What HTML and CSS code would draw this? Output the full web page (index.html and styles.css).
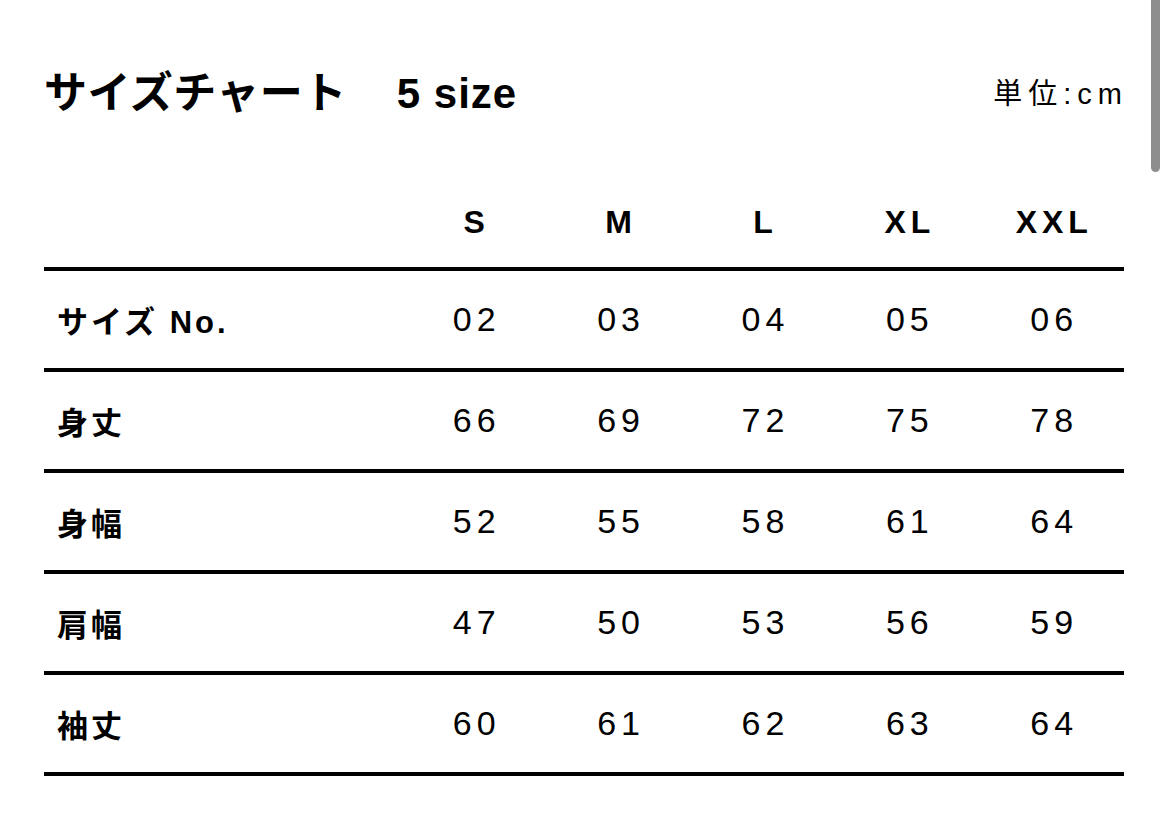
FILE: index.html
```html
<!DOCTYPE html>
<html lang="ja">
<head>
<meta charset="utf-8">
<title>サイズチャート</title>
<link rel="stylesheet" href="styles.css">
</head>
<body>
<div class="page">
  <div class="head">
    <h1 class="title">サイズチャート<span class="count">5 size</span></h1>
    <div class="unit">単位:cm</div>
  </div>
  <table class="chart">
    <colgroup>
      <col class="c-label">
      <col class="c-size"><col class="c-size"><col class="c-size"><col class="c-size"><col class="c-size">
    </colgroup>
    <thead>
      <tr><th></th><th>S</th><th>M</th><th>L</th><th>XL</th><th>XXL</th></tr>
    </thead>
    <tbody>
      <tr><th>サイズ No.</th><td>02</td><td>03</td><td>04</td><td>05</td><td>06</td></tr>
      <tr><th>身丈</th><td>66</td><td>69</td><td>72</td><td>75</td><td>78</td></tr>
      <tr><th>身幅</th><td>52</td><td>55</td><td>58</td><td>61</td><td>64</td></tr>
      <tr><th>肩幅</th><td>47</td><td>50</td><td>53</td><td>56</td><td>59</td></tr>
      <tr><th>袖丈</th><td>60</td><td>61</td><td>62</td><td>63</td><td>64</td></tr>
    </tbody>
  </table>
</div>
<div class="scrollbar"></div>
</body>
</html>
```

FILE: styles.css
```css
html, body {
  margin: 0;
  padding: 0;
  background: #fff;
}
body {
  font-family: "Liberation Sans", "Noto Sans CJK JP", sans-serif;
  color: #000;
}
.page {
  width: 1080px;
  padding: 59px 0 0 44px;
}
.head {
  display: flex;
  justify-content: space-between;
  align-items: center;
  height: 64px;
}
.title {
  margin: 0;
  font-family: "Noto Sans CJK JP", sans-serif;
  font-size: 43px;
  font-weight: 700;
  letter-spacing: 0.5px;
  line-height: 1;
}
.count {
  font-family: "Liberation Sans", sans-serif;
  font-size: 42px;
  font-weight: 700;
  margin-left: 50px;
  letter-spacing: 1px;
}
.unit {
  font-family: "Liberation Sans", "Noto Sans CJK JP", sans-serif;
  font-size: 29px;
  letter-spacing: 6px;
  margin-right: -4px;
}
.chart {
  width: 1080px;
  border-collapse: collapse;
  table-layout: fixed;
  margin-top: 54px;
}
.c-label { width: 358px; }
.c-size { width: 144.4px; }
.chart thead th {
  height: 90px;
  font-size: 32px;
  font-weight: 700;
  letter-spacing: 5px;
  padding: 0 0 0 5px;
  text-align: center;
  vertical-align: middle;
  border-bottom: 4px solid #000;
}
.chart tbody th {
  height: 97px;
  padding: 0 0 0 13px;
  text-align: left;
  font-family: "Liberation Sans", "Noto Sans CJK JP", sans-serif;
  font-size: 31px;
  font-weight: 700;
  letter-spacing: 3px;
  border-bottom: 4px solid #000;
  vertical-align: middle;
}
.chart tbody td {
  height: 97px;
  padding: 0 0 0 5px;
  text-align: center;
  font-size: 34px;
  letter-spacing: 5px;
  border-bottom: 4px solid #000;
  vertical-align: middle;
}
.scrollbar {
  position: fixed;
  top: 0;
  right: 9px;
  width: 9px;
  height: 172px;
  background: #8e8e8e;
  border-radius: 0 0 5px 5px;
}
```
